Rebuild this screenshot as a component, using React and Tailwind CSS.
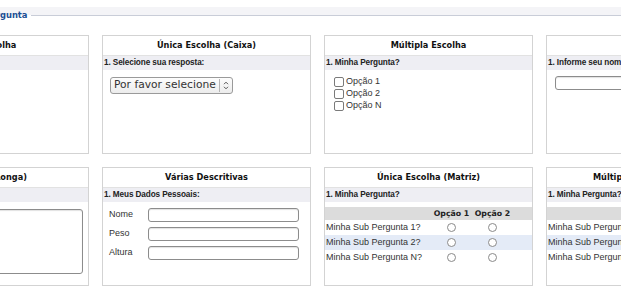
import React from "react";

const TITLE = "font-['DejaVu_Sans',sans-serif] font-bold text-[8.2px] text-[#111]";
const BAND = "h-[14px] bg-[#eeeef3] flex items-center px-[1px] font-['Liberation_Sans',Arial,sans-serif] font-bold text-[8.2px] tracking-[-0.1px] text-[#222]";
const LABEL = "font-['Liberation_Sans',Arial,sans-serif] text-[9px] text-[#333]";

function Card({ title, question, children }) {
  return (
    <div className="w-[209px] h-[119px] border border-[#d3d3d3] bg-white flex flex-col overflow-hidden">
      <div className={"h-[20px] shrink-0 flex items-center justify-center border-b border-[#e2e2e2] whitespace-nowrap " + TITLE}>
        {title}
      </div>
      <div className={BAND + " shrink-0 whitespace-nowrap"}>{question}</div>
      {children}
    </div>
  );
}

function Radio() {
  return <span className="block w-[9px] h-[9px] rounded-full border border-[#8a8a8a] bg-white" />;
}

function Checkbox() {
  return <span className="block w-[10px] h-[10px] rounded-[2px] border border-[#7a7a7a] bg-white" />;
}

function TextInput({ className = "" }) {
  return (
    <div className={"h-[14px] rounded-[3px] border border-[#8c8c8c] bg-white shadow-[inset_0_1px_1px_rgba(0,0,0,0.12)] " + className} />
  );
}

function Matrix({ headers = true }) {
  const rows = ["Minha Sub Pergunta 1?", "Minha Sub Pergunta 2?", "Minha Sub Pergunta N?"];
  return (
    <div className="mt-[5px]">
      <div className="h-[13px] bg-[#dcdcdc] grid grid-cols-[106px_41px_41px_1fr] items-center font-['DejaVu_Sans',sans-serif] font-bold text-[7.8px] text-[#222]">
        <span />
        <span className="text-center whitespace-nowrap">{headers ? "Opção 1" : ""}</span>
        <span className="text-center whitespace-nowrap">{headers ? "Opção 2" : ""}</span>
        <span />
      </div>
      {rows.map((r, i) => (
        <div
          key={r}
          className={
            "h-[15px] grid grid-cols-[106px_41px_41px_1fr] items-center " +
            (i === 1 ? "bg-[#e4ebf7]" : "bg-white")
          }
        >
          <span className={"pl-[1px] whitespace-nowrap " + LABEL}>{r}</span>
          <span className="flex justify-center"><Radio /></span>
          <span className="flex justify-center"><Radio /></span>
          <span />
        </div>
      ))}
    </div>
  );
}

export default function App() {
  return (
    <div className="w-[621px] h-[303px] overflow-hidden bg-white">
      {/* legend header */}
      <div className="h-[35px] pt-[7px]">
        <div className="h-[8px] bg-[#f4f4f7]" />
        <div className="-mt-[6px] h-[12px] flex items-center">
          <span className="-ml-[16px] pr-[3px] font-['DejaVu_Sans',sans-serif] font-bold text-[8.4px] leading-none text-[#1c4f94] whitespace-nowrap">
            Pergunta
          </span>
          <div className="flex-1 h-px bg-[#c9cdd8]" />
        </div>
      </div>

      <div className="-ml-[120px] grid grid-cols-[repeat(4,209px)] gap-[13px]">
        {/* Row 1 */}
        <Card title="Única Escolha" question="1. Minha Pergunta?">
          <div className="mt-[7px] ml-[8px] flex flex-col gap-[2px]">
            {["Opção 1", "Opção 2", "Opção N"].map((o) => (
              <div key={o} className="h-[10px] flex items-center gap-[2px]">
                <Radio />
                <span className={LABEL}>{o}</span>
              </div>
            ))}
          </div>
        </Card>

        <Card title="Única Escolha (Caixa)" question="1. Selecione sua resposta:">
          <div className="mt-[7px] ml-[7px] w-[123px] h-[17px] rounded-[3px] border border-[#9a9a9a] bg-gradient-to-b from-[#fdfdfd] to-[#ececec] flex items-center">
            <span className="flex-1 pl-[3px] font-['DejaVu_Sans',sans-serif] text-[10.7px] leading-none text-[#333] whitespace-nowrap">
              Por favor selecione
            </span>
            <span className="w-px h-[13px] bg-[#b5b5b5]" />
            <svg width="12" height="13" viewBox="0 0 12 13" className="shrink-0">
              <path d="M4 5.2 L6 3.2 L8 5.2" fill="none" stroke="#555" strokeWidth="1" />
              <path d="M4 7.8 L6 9.8 L8 7.8" fill="none" stroke="#555" strokeWidth="1" />
            </svg>
          </div>
        </Card>

        <Card title="Múltipla Escolha" question="1. Minha Pergunta?">
          <div className="mt-[7px] ml-[9px] flex flex-col gap-[2px]">
            {["Opção 1", "Opção 2", "Opção N"].map((o) => (
              <div key={o} className="h-[10px] flex items-center gap-[2px]">
                <Checkbox />
                <span className={LABEL}>{o}</span>
              </div>
            ))}
          </div>
        </Card>

        <Card title="Descritiva" question="1. Informe seu nome:">
          <TextInput className="mt-[6px] ml-[8px] w-[180px]" />
        </Card>

        {/* Row 2 */}
        <Card title="Descritiva (Longa)" question="1. Minha Pergunta?">
          <div className="mt-[7px] ml-[7px] w-[195px] h-[65px] rounded-[3px] border border-[#8c8c8c] bg-white shadow-[inset_0_1px_1px_rgba(0,0,0,0.12)]" />
        </Card>

        <Card title="Várias Descritivas" question="1. Meus Dados Pessoais:">
          <div className="mt-[6px] ml-[6px] flex flex-col gap-[5px]">
            {["Nome", "Peso", "Altura"].map((l) => (
              <div key={l} className="h-[14px] flex items-center">
                <span className={"w-[39px] " + LABEL}>{l}</span>
                <TextInput className="w-[151px]" />
              </div>
            ))}
          </div>
        </Card>

        <Card title="Única Escolha (Matriz)" question="1. Minha Pergunta?">
          <Matrix />
        </Card>

        <Card title="Múltipla Escolha (Matriz)" question="1. Minha Pergunta?">
          <Matrix />
        </Card>
      </div>
    </div>
  );
}
